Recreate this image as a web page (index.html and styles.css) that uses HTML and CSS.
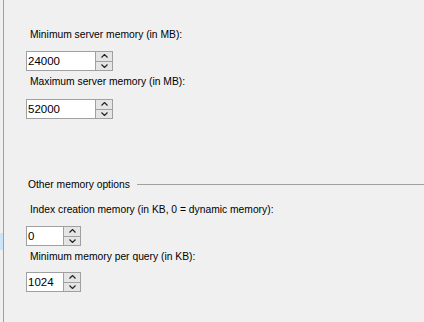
FILE: index.html
```html
<!DOCTYPE html>
<html lang="en">
<head>
    <meta charset="UTF-8">
    <title>Server Properties - Memory</title>
    <link rel="stylesheet" href="styles.css">
</head>
<body>
    <div class="page">
        <div class="edge">
            <div class="edge-sel"></div>
        </div>
        <main class="panel">
            <div class="field">
                <label class="lbl">Minimum server memory (in MB):</label>
                <div class="spin wide">
                    <input class="spin-input" type="text" value="24000">
                    <div class="spin-btns">
                        <button class="spin-btn"><svg width="7" height="4" viewBox="0 0 7 4"><path d="M0.5 3.5 L3.5 0.5 L6.5 3.5" fill="none" stroke="#222" stroke-width="1.2"/></svg></button>
                        <button class="spin-btn"><svg width="7" height="4" viewBox="0 0 7 4"><path d="M0.5 0.5 L3.5 3.5 L6.5 0.5" fill="none" stroke="#222" stroke-width="1.2"/></svg></button>
                    </div>
                </div>
            </div>
            <div class="field">
                <label class="lbl">Maximum server memory (in MB):</label>
                <div class="spin wide">
                    <input class="spin-input" type="text" value="52000">
                    <div class="spin-btns">
                        <button class="spin-btn"><svg width="7" height="4" viewBox="0 0 7 4"><path d="M0.5 3.5 L3.5 0.5 L6.5 3.5" fill="none" stroke="#222" stroke-width="1.2"/></svg></button>
                        <button class="spin-btn"><svg width="7" height="4" viewBox="0 0 7 4"><path d="M0.5 0.5 L3.5 3.5 L6.5 0.5" fill="none" stroke="#222" stroke-width="1.2"/></svg></button>
                    </div>
                </div>
            </div>

            <div class="group">
                <div class="group-head">
                    <span>Other memory options</span>
                    <div class="group-line"></div>
                </div>
                <div class="field">
                    <label class="lbl">Index creation memory (in KB, 0 = dynamic memory):</label>
                    <div class="spin narrow">
                        <input class="spin-input" type="text" value="0">
                        <div class="spin-btns">
                            <button class="spin-btn"><svg width="7" height="4" viewBox="0 0 7 4"><path d="M0.5 3.5 L3.5 0.5 L6.5 3.5" fill="none" stroke="#222" stroke-width="1.2"/></svg></button>
                            <button class="spin-btn"><svg width="7" height="4" viewBox="0 0 7 4"><path d="M0.5 0.5 L3.5 3.5 L6.5 0.5" fill="none" stroke="#222" stroke-width="1.2"/></svg></button>
                        </div>
                    </div>
                </div>
                <div class="field">
                    <label class="lbl">Minimum memory per query (in KB):</label>
                    <div class="spin narrow">
                        <input class="spin-input" type="text" value="1024">
                        <div class="spin-btns">
                            <button class="spin-btn"><svg width="7" height="4" viewBox="0 0 7 4"><path d="M0.5 3.5 L3.5 0.5 L6.5 3.5" fill="none" stroke="#222" stroke-width="1.2"/></svg></button>
                            <button class="spin-btn"><svg width="7" height="4" viewBox="0 0 7 4"><path d="M0.5 0.5 L3.5 3.5 L6.5 0.5" fill="none" stroke="#222" stroke-width="1.2"/></svg></button>
                        </div>
                    </div>
                </div>
            </div>
        </main>
    </div>
</body>
</html>
```

FILE: styles.css
```css
body {
    margin: 0;
    background-color: #f0f0f0;
    font-family: "Liberation Sans", Arial, sans-serif;
    font-size: 10.3px;
    color: #000;
    overflow: hidden;
}
.page {
    display: flex;
    height: 322px;
}
.edge {
    width: 3px;
}
.edge-sel {
    margin-top: 233px;
    height: 17px;
    background-color: #cce4f7;
}
.panel {
    flex: 1;
    border-left: 1px solid #a0a0a0;
    padding: 28px 0 0 22px;
}
.field {
    margin-bottom: 4px;
}
.lbl {
    display: block;
    line-height: 13px;
    padding-left: 4px;
    margin-bottom: 10px;
}
.field + .field .lbl {
    margin-bottom: 11px;
}
.spin {
    display: flex;
    height: 18px;
    border: 1px solid #a0a0a0;
    background-color: #fff;
}
.spin.wide {
    width: 85px;
}
.spin.narrow {
    width: 53px;
}
.spin-input {
    flex: 1;
    min-width: 0;
    border: none;
    padding: 0 0 0 1px;
    margin: 0;
    font-family: "Liberation Sans", Arial, sans-serif;
    font-size: 11.5px;
    background: transparent;
    outline: none;
}
.spin-btns {
    width: 16px;
    display: flex;
    flex-direction: column;
    border-left: 1px solid #a0a0a0;
    background-color: #a0a0a0;
    gap: 1px;
}
.spin-btn {
    flex: 1;
    display: flex;
    align-items: center;
    justify-content: center;
    padding: 0;
    margin: 0;
    border: none;
    background-color: #e5e5e5;
}
.group {
    margin-top: 59px;
}
.group-head {
    display: flex;
    align-items: center;
    line-height: 13px;
    padding-left: 2px;
    margin-bottom: 12px;
}
.group-line {
    flex: 1;
    border-top: 1px solid #a0a0a0;
    margin-left: 7px;
}
.group .field + .field .lbl {
    margin-bottom: 9px;
}
```
